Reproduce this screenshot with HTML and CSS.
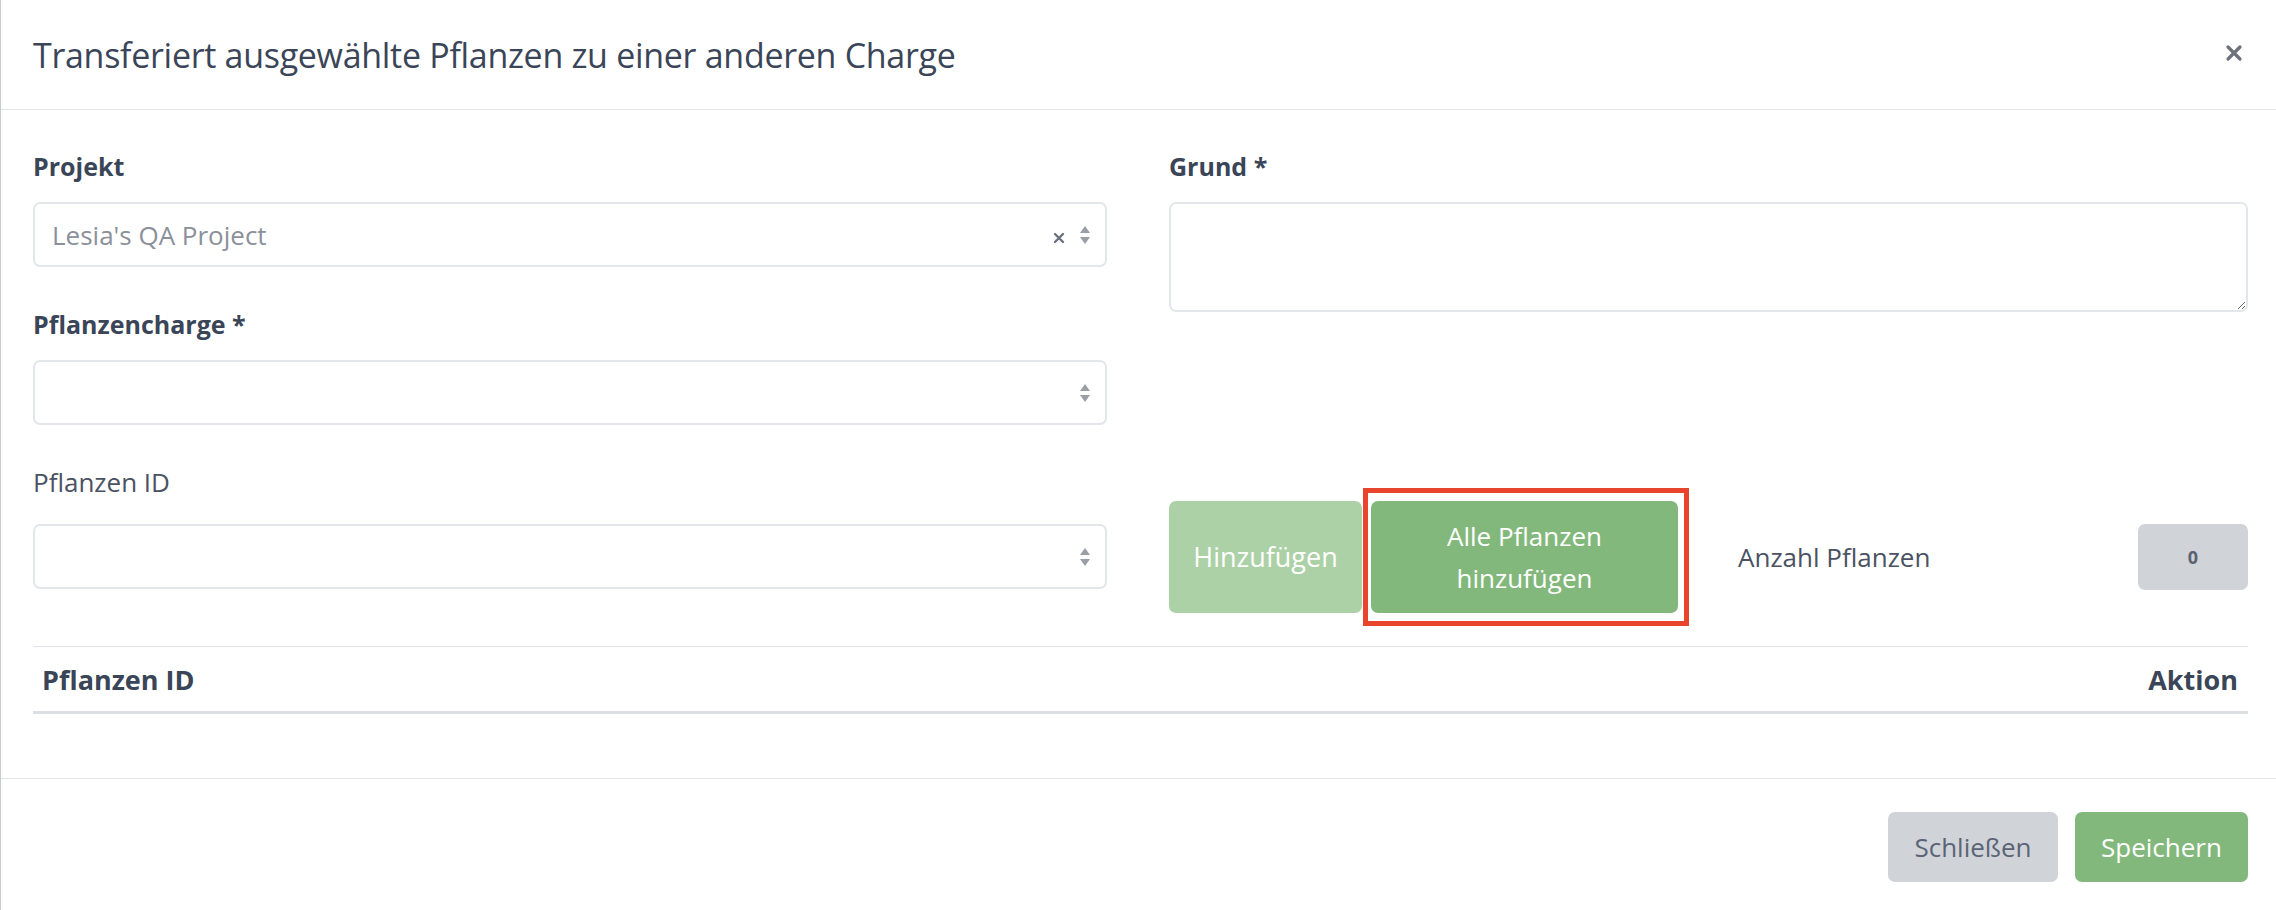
FILE: index.html
```html
<!DOCTYPE html>
<html lang="de">
<head>
<meta charset="utf-8">
<title>Transferiert ausgewählte Pflanzen</title>
<link rel="stylesheet" href="styles.css">
</head>
<body>
<div class="modal">
  <div class="modal-header">
    <h1 class="modal-title">Transferiert ausgewählte Pflanzen zu einer anderen Charge</h1>
    <button class="close" aria-label="Schließen">
      <svg width="18" height="18" viewBox="0 0 18 18"><path d="M3 3 L15 15 M15 3 L3 15" stroke="#6c717b" stroke-width="3.2" stroke-linecap="round"/></svg>
    </button>
  </div>
  <div class="modal-body">
    <div class="grid">
      <div class="col">
        <div class="group">
          <label class="label">Projekt</label>
          <div class="select">
            <span class="placeholder">Lesia's QA Project</span>
            <span class="clear">
              <svg width="12" height="12" viewBox="0 0 12 12"><path d="M2 2 L10 10 M10 2 L2 10" stroke="#6b717c" stroke-width="2.4" stroke-linecap="round"/></svg>
            </span>
            <span class="arrows">
              <svg width="12" height="20" viewBox="0 0 12 20"><path d="M6 1 L11 8 L1 8 Z" fill="#9a9ea7"/><path d="M1 12 L11 12 L6 19 Z" fill="#9a9ea7"/></svg>
            </span>
          </div>
        </div>
        <div class="group">
          <label class="label">Pflanzencharge *</label>
          <div class="select">
            <span class="placeholder"></span>
            <span class="arrows">
              <svg width="12" height="20" viewBox="0 0 12 20"><path d="M6 1 L11 8 L1 8 Z" fill="#9a9ea7"/><path d="M1 12 L11 12 L6 19 Z" fill="#9a9ea7"/></svg>
            </span>
          </div>
        </div>
        <div class="group group-last">
          <label class="label label-normal">Pflanzen ID</label>
          <div class="select">
            <span class="placeholder"></span>
            <span class="arrows">
              <svg width="12" height="20" viewBox="0 0 12 20"><path d="M6 1 L11 8 L1 8 Z" fill="#9a9ea7"/><path d="M1 12 L11 12 L6 19 Z" fill="#9a9ea7"/></svg>
            </span>
          </div>
        </div>
      </div>
      <div class="col">
        <div class="group">
          <label class="label">Grund *</label>
          <textarea class="textarea"></textarea>
        </div>
        <div class="actions">
          <button class="btn btn-light-green">Hinzufügen</button>
          <button class="btn btn-green btn-highlight">Alle Pflanzen<br>hinzufügen</button>
          <span class="count-label">Anzahl Pflanzen</span>
          <span class="count">0</span>
        </div>
      </div>
    </div>
    <table class="table">
      <thead>
        <tr>
          <th class="th-left">Pflanzen ID</th>
          <th class="th-right">Aktion</th>
        </tr>
      </thead>
    </table>
  </div>
  <div class="modal-footer">
    <button class="btn btn-gray">Schließen</button>
    <button class="btn btn-green btn-save">Speichern</button>
  </div>
</div>
</body>
</html>
```
FILE: styles.css
```css
* { box-sizing: border-box; }

html, body {
  margin: 0;
  padding: 0;
  background: #ffffff;
}

body {
  font-family: "Open Sans", "Noto Sans", sans-serif;
  color: #3b4557;
}

.modal {
  width: 2276px;
  height: 910px;
  border-left: 1px solid #c9ccd1;
  background: #fff;
  display: flex;
  flex-direction: column;
}

.modal-header {
  height: 110px;
  border-bottom: 1px solid #e1e4e9;
  display: flex;
  align-items: center;
  justify-content: space-between;
  padding: 0 33px 0 32px;
}

.modal-title {
  margin: 0;
  font-size: 34px;
  font-weight: 500;
  color: #3a4558;
  letter-spacing: -0.3px;
}

.close {
  border: 0;
  background: none;
  padding: 0;
  margin-top: -4px;
  cursor: pointer;
  display: flex;
}

.modal-body {
  padding: 39px 28px 64px 32px;
  border-bottom: 1px solid #e1e4e9;
}

.grid {
  display: grid;
  grid-template-columns: 1074px 1fr;
  column-gap: 62px;
}

.group {
  margin-bottom: 40px;
}

.group-last {
  margin-bottom: 0;
}

.label {
  display: block;
  font-size: 25px;
  font-weight: 700;
  line-height: 34px;
  margin-bottom: 19px;
  color: #3a4557;
}

.label-normal {
  font-weight: 400;
  font-size: 26px;
  color: #4a5263;
  margin-bottom: 25px;
}

.select {
  height: 65px;
  border: 2px solid #e3e6ea;
  border-radius: 7px;
  display: flex;
  align-items: center;
  padding: 0 14px 0 17px;
}

.placeholder {
  flex: 1;
  font-size: 26px;
  color: #8b909a;
}

.clear {
  display: flex;
  margin-right: 14px;
  margin-top: 6px;
}

.arrows {
  display: flex;
}

.textarea {
  display: block;
  width: 100%;
  height: 110px;
  border: 2px solid #e3e6ea;
  border-radius: 7px;
  resize: vertical;
  font-family: inherit;
  font-size: 22px;
}

.actions {
  margin-top: 189px;
  display: flex;
  align-items: center;
}

.btn {
  border: 0;
  border-radius: 7px;
  font-family: inherit;
  font-size: 26px;
  line-height: 40px;
  cursor: pointer;
}

.btn-light-green {
  width: 193px;
  height: 112px;
  background: #acd1a7;
  color: #ffffff;
  font-size: 27px;
}

.btn-green {
  background: #82b87c;
  color: #ffffff;
}

.btn-highlight {
  position: relative;
  width: 307px;
  height: 112px;
  margin-left: 9px;
  font-size: 26px;
  line-height: 42px;
}

.btn-highlight::after {
  content: "";
  position: absolute;
  left: -8px;
  right: -11px;
  top: -13px;
  bottom: -13px;
  border: 5px solid #e8452c;
}

.count-label {
  margin-left: 60px;
  font-size: 26px;
  color: #4a5263;
}

.count {
  margin-left: auto;
  width: 110px;
  height: 66px;
  border-radius: 7px;
  background: #d0d3d8;
  display: flex;
  align-items: center;
  justify-content: center;
  font-size: 18px;
  font-weight: 700;
  color: #5a6171;
}

.table {
  width: 100%;
  margin-top: 33px;
  border-collapse: collapse;
}

.table th {
  height: 66px;
  border-top: 1px solid #dfe2e7;
  border-bottom: 3px solid #dcdfe4;
  font-size: 27px;
  font-weight: 700;
  color: #3a4557;
  padding: 0 10px 0 9px;
}

.th-left { text-align: left; }
.th-right { text-align: right; }

.modal-footer {
  display: flex;
  justify-content: flex-end;
  align-items: flex-start;
  gap: 17px;
  padding: 33px 28px 0 0;
  flex: 1;
}

.btn-gray {
  width: 170px;
  height: 70px;
  background: #d0d3d8;
  color: #5b6476;
}

.btn-save {
  width: 173px;
  height: 70px;
}
```
